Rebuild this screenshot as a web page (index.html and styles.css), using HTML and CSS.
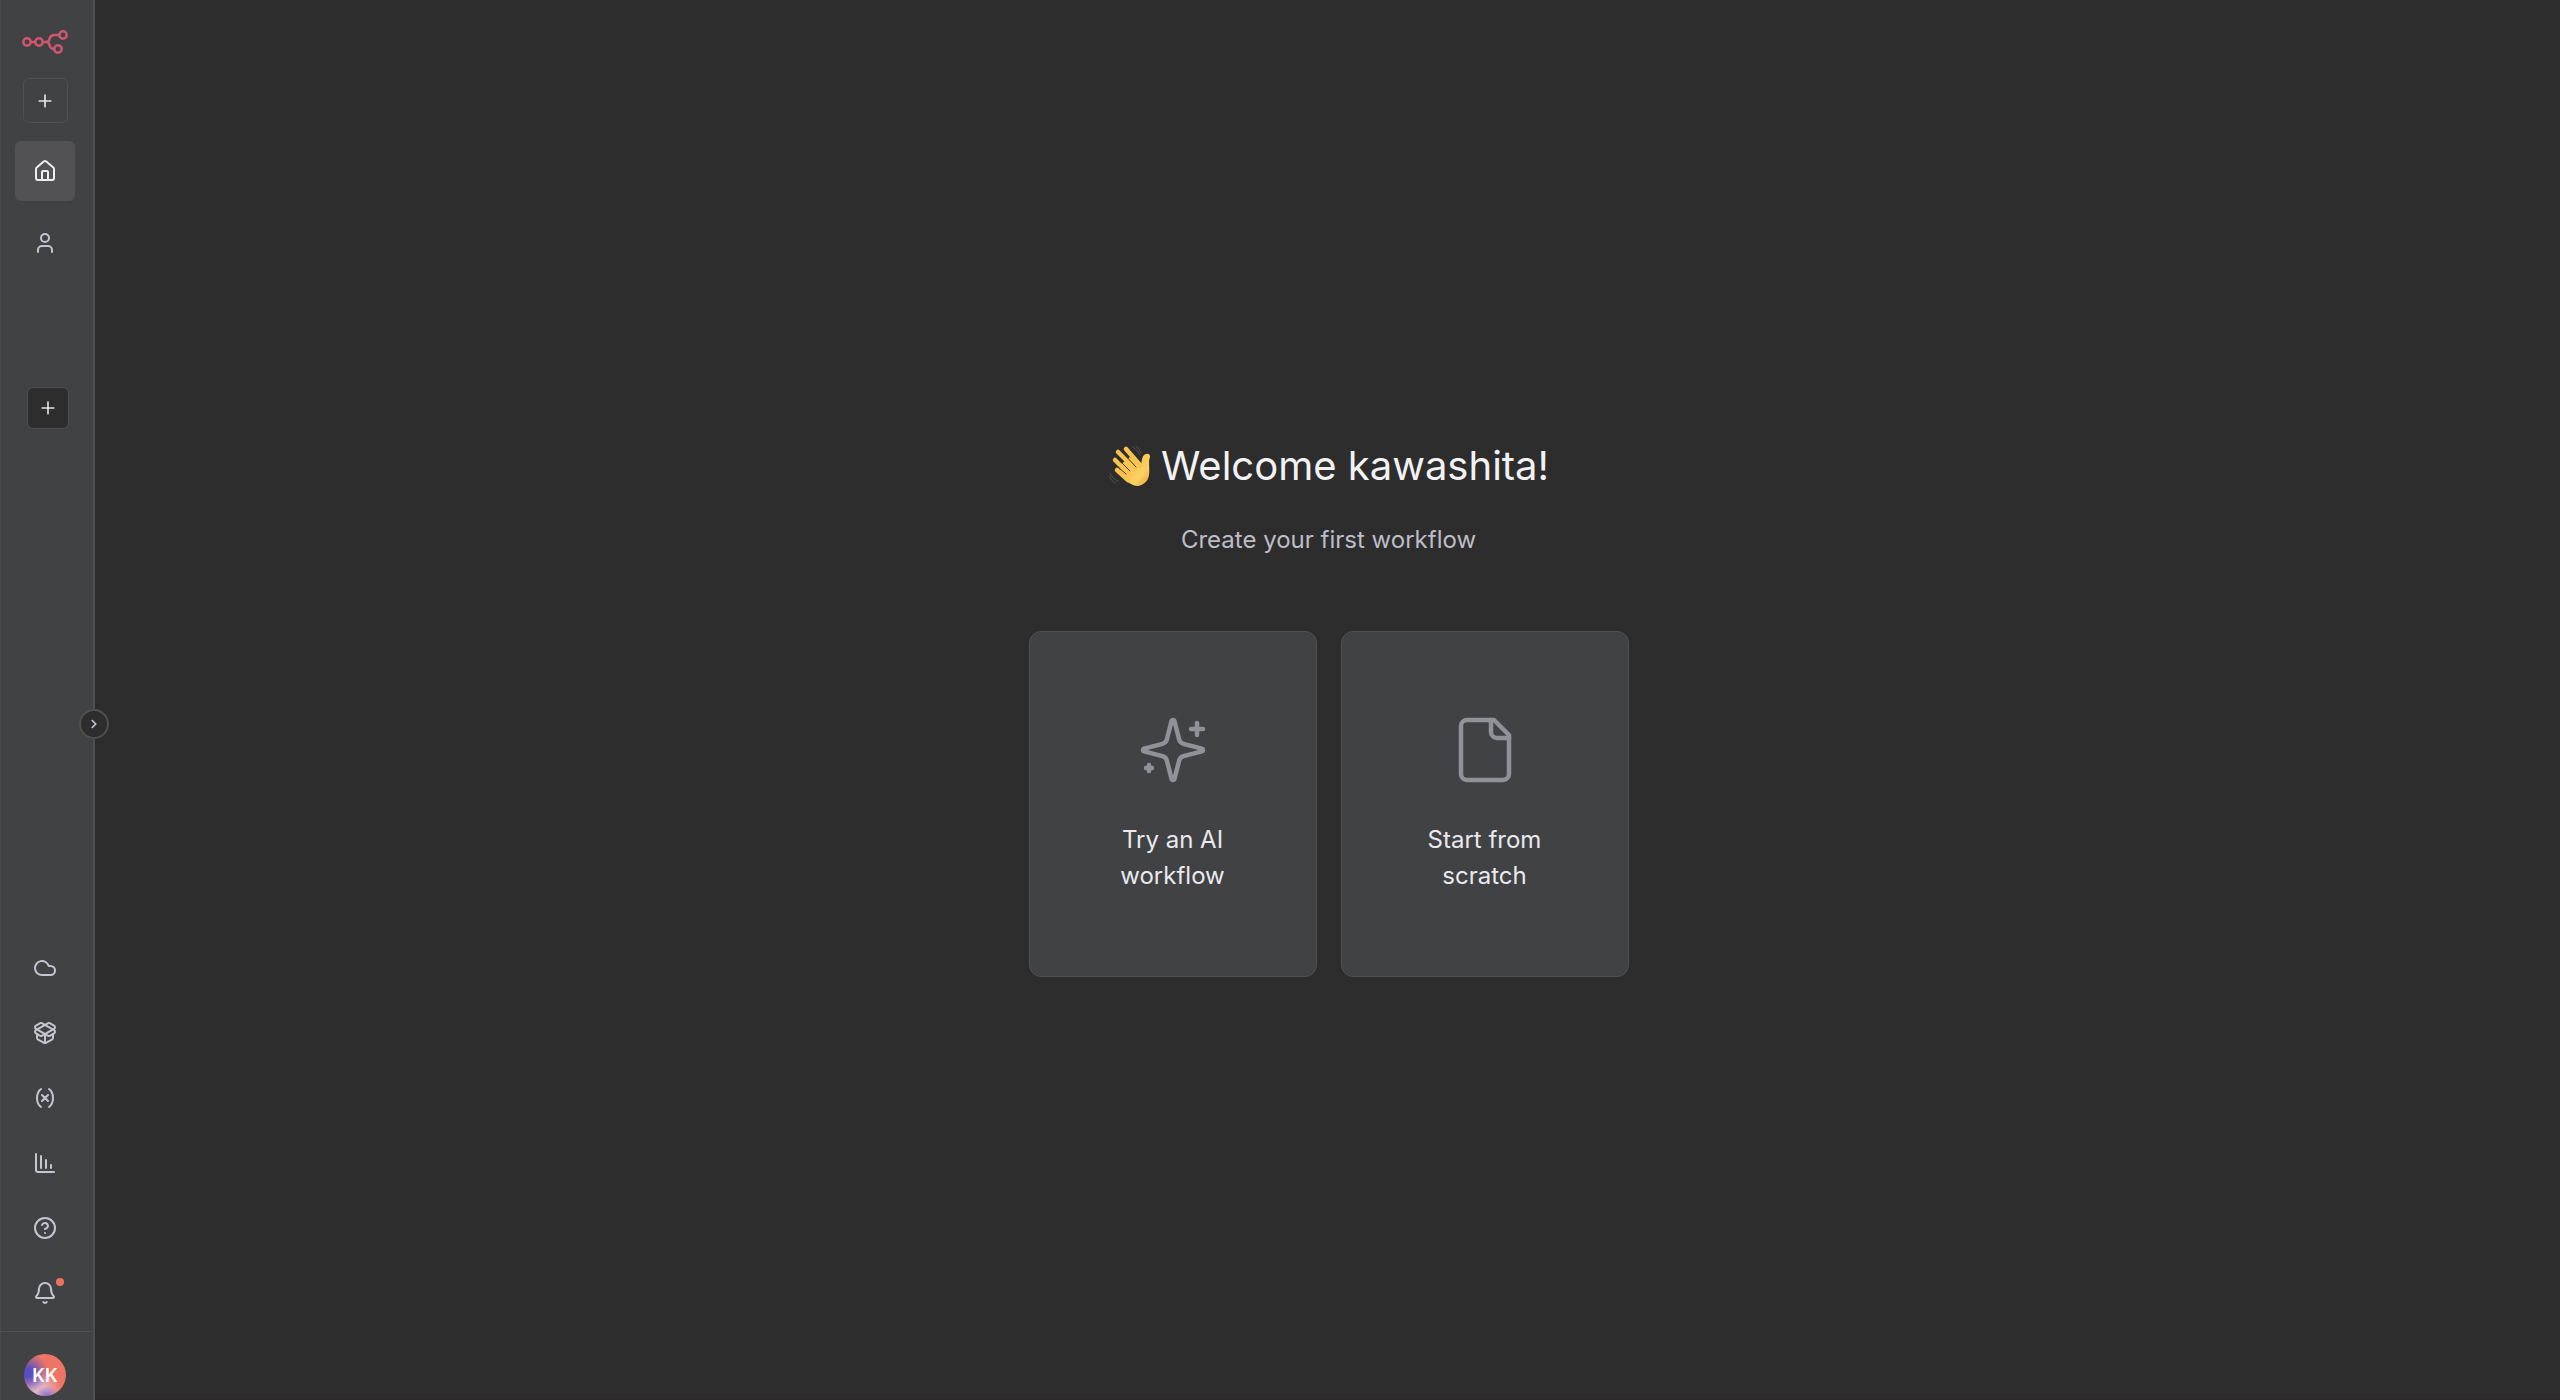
FILE: index.html
```html
<!DOCTYPE html>
<html lang="en">
<head>
    <title>Workflows</title>
    <meta charset="utf-8">
    <meta name="viewport" content="width=device-width, initial-scale=1">
    <link rel="stylesheet" href="styles.css">
</head>
<body>
    <aside class="sidebar">
        <div class="top">
            <a href="#" class="logo" aria-label="Overview">
                <svg viewBox="0 0 46 24" width="46" height="24" fill="none" stroke="currentColor" stroke-width="2.500">
                    <circle cx="5" cy="12" r="3.700"/>
                    <circle cx="17" cy="12" r="3.700"/>
                    <circle cx="41" cy="5" r="3.700"/>
                    <circle cx="36" cy="19" r="3.700"/>
                    <path d="M9 12h4M21 12h3q3 0 3.500-3t4-4h5.500M24 12q3 0 3.500 3t3.500 4h1"/>
                </svg>
            </a>
            <button class="add" aria-label="Create"><svg class="icon" viewBox="0 0 24 24"><path d="M5 12h14M12 5v14"/></svg></button>
            <nav class="menu">
                <a href="#" class="item active" aria-label="Home"><svg class="icon" viewBox="0 0 24 24"><path d="M15 21v-8a1 1 0 0 0-1-1h-4a1 1 0 0 0-1 1v8"/><path d="M3 10a2 2 0 0 1 .709-1.528l7-5.999a2 2 0 0 1 2.582 0l7 5.999A2 2 0 0 1 21 10v9a2 2 0 0 1-2 2H5a2 2 0 0 1-2-2z"/></svg></a>
                <a href="#" class="item" aria-label="Personal"><svg class="icon" viewBox="0 0 24 24"><path d="M19 21v-2a4 4 0 0 0-4-4H9a4 4 0 0 0-4 4v2"/><circle cx="12" cy="7" r="4"/></svg></a>
            </nav>
            <button class="add project" aria-label="Add project"><svg class="icon" viewBox="0 0 24 24"><path d="M5 12h14M12 5v14"/></svg></button>
        </div>

        <button class="toggle" aria-label="Expand sidebar"><svg class="icon" viewBox="0 0 24 24"><path d="m9 18 6-6-6-6"/></svg></button>

        <nav class="bottom">
            <a href="#" class="link" aria-label="Admin panel"><svg class="icon" viewBox="0 0 24 24"><path d="M17.500 19H9a7 7 0 1 1 6.710-9h1.790a4.500 4.500 0 1 1 0 9Z"/></svg></a>
            <a href="#" class="link" aria-label="Templates"><svg class="icon" viewBox="0 0 24 24"><path d="M12 22v-9"/><path d="M15.170 2.210a1.670 1.670 0 0 1 1.630 0L21 4.570a1.930 1.930 0 0 1 0 3.360L8.820 14.790a1.655 1.655 0 0 1-1.640 0L3 12.430a1.930 1.930 0 0 1 0-3.360z"/><path d="M20 13v3.870a2.060 2.060 0 0 1-1.110 1.830l-6 3.080a1.930 1.930 0 0 1-1.780 0l-6-3.080A2.060 2.060 0 0 1 4 16.870V13"/><path d="M21 12.430a1.930 1.930 0 0 0 0-3.360L8.830 2.200a1.640 1.640 0 0 0-1.630 0L3 4.570a1.930 1.930 0 0 0 0 3.360l12.180 6.860a1.636 1.636 0 0 0 1.630 0z"/></svg></a>
            <a href="#" class="link" aria-label="Variables"><svg class="icon" viewBox="0 0 24 24"><path d="M8 21s-4-3-4-9 4-9 4-9M16 3s4 3 4 9-4 9-4 9M15 9l-6 6M9 9l6 6"/></svg></a>
            <a href="#" class="link" aria-label="Insights"><svg class="icon" viewBox="0 0 24 24"><path d="M3 3v16a2 2 0 0 0 2 2h16M8 17V5M13 17V9M18 17v-3"/></svg></a>
            <a href="#" class="link" aria-label="Help"><svg class="icon" viewBox="0 0 24 24"><circle cx="12" cy="12" r="10"/><path d="M9.090 9a3 3 0 0 1 5.830 1c0 2-3 3-3 3M12 17h.010"/></svg></a>
            <a href="#" class="link" aria-label="What's new"><svg class="icon" viewBox="0 0 24 24"><path d="M10.268 21a2 2 0 0 0 3.464 0"/><path d="M3.262 15.326A1 1 0 0 0 4 17h16a1 1 0 0 0 .740-1.673C19.410 13.956 18 12.499 18 8A6 6 0 0 0 6 8c0 4.499-1.411 5.956-2.738 7.326"/></svg><span class="dot"></span></a>
        </nav>
        <div class="user">
            <button class="avatar" aria-label="Account">KK</button>
        </div>
    </aside>

    <main class="content">
        <h1>
            <svg class="wave" viewBox="0 0 42 42" aria-hidden="true">
                <defs>
                    <linearGradient id="skin" x1="0" y1="0" x2="1" y2="1">
                        <stop offset="0" stop-color="#f7bf4b"/>
                        <stop offset=".7" stop-color="#fbcf63"/>
                        <stop offset="1" stop-color="#e3a035"/>
                    </linearGradient>
                </defs>
                <path d="M12 20 22 12 33 20C34 15 34 10 38 9q4-1 4 3c-2 5 0 11-1 18-1 8-9 13-16 10-5-2-8-5-12-9z" fill="url(#skin)"/>
                <path d="M9 25 20 35M7 15 22 30M10 7 27 24M18 4 32 20" stroke="#f8c451" stroke-width="4.500" stroke-linecap="round" fill="none"/>
                <path d="M10 22l8 7M11 15l11 11M16 9l12 13" stroke="#4b351b" stroke-width="1" stroke-linecap="round" fill="none"/>
                <path d="M25 2q5 3 7 8M28 1q4 3 5 7M2 28q2 6 8 8M1 31q2 5 6 7" stroke="#505050" stroke-width="1" stroke-linecap="round" fill="none"/>
            </svg>
            Welcome kawashita!
        </h1>
        <p class="subtitle">Create your first workflow</p>
        <div class="cards">
            <button class="card">
                <svg class="icon" viewBox="0 0 24 24"><path d="M9.937 15.500A2 2 0 0 0 8.500 14.063l-6.135-1.582a.5.5 0 0 1 0-.962L8.500 9.936A2 2 0 0 0 9.937 8.500l1.582-6.135a.5.5 0 0 1 .963 0L14.063 8.500A2 2 0 0 0 15.500 9.937l6.135 1.581a.5.5 0 0 1 0 .964L15.500 14.063a2 2 0 0 0-1.437 1.437l-1.582 6.135a.5.5 0 0 1-.963 0zM20 3v4M22 5h-4M4 17v2M5 18H3"/></svg>
                <span>Try an AI workflow</span>
            </button>
            <button class="card">
                <svg class="icon" viewBox="0 0 24 24"><path d="M15 2H6a2 2 0 0 0-2 2v16a2 2 0 0 0 2 2h12a2 2 0 0 0 2-2V7Z"/><path d="M14 2v4a2 2 0 0 0 2 2h4"/></svg>
                <span>Start from scratch</span>
            </button>
        </div>
    </main>
</body>
</html>
```

FILE: styles.css
```css
* { box-sizing: border-box; }
body { display: flex; min-height: 100vh; margin: 0; background: #2d2d2d; color: #f2f2f5; font-family: Inter, sans-serif; }
button { padding: 0; border: 0; background: none; color: inherit; font: inherit; cursor: pointer; }
a { color: inherit; text-decoration: none; }
.icon { width: 24px; height: 24px; fill: none; stroke: currentColor; stroke-width: 2; stroke-linecap: round; stroke-linejoin: round; }

.sidebar { position: relative; display: flex; flex-direction: column; flex-shrink: 0; width: 95px; height: 100vh; background: #414244; border-left: 1px solid #4a4a4d; border-right: 2px solid #505052; color: #c5c5cf; }
.top { display: flex; flex-direction: column; align-items: center; width: 88px; padding-top: 30px; }
.logo { display: flex; color: #cf5670; }
.add { display: flex; align-items: center; justify-content: center; width: 45px; height: 45px; margin-top: 24px; border: 1px solid #505052; border-radius: 6px; color: #e4e4e8; }
.add .icon { width: 20px; height: 20px; }
.menu { display: flex; flex-direction: column; gap: 12px; margin-top: 18px; }
.item { display: flex; align-items: center; justify-content: center; width: 60px; height: 60px; border-radius: 6px; }
.active { background: #525254; color: #eeeef2; }
.project { width: 42px; height: 42px; margin: 114px 0 0 6px; background: #2d2d2d; }

.toggle { position: absolute; top: calc(50% + 9px); right: -16px; display: flex; align-items: center; justify-content: center; width: 30px; height: 30px; background: #2d2d2d; border: 2px solid #505052; border-radius: 50%; }
.toggle .icon { width: 14px; height: 14px; stroke-width: 3; }

.bottom { display: flex; flex-direction: column; gap: 5px; width: 88px; margin-top: auto; padding-bottom: 8px; }
.link { position: relative; display: flex; align-items: center; justify-content: center; height: 60px; }
.dot { position: absolute; top: 15px; right: 25px; width: 8px; height: 8px; border-radius: 50%; background: #f0735f; }
.user { display: flex; justify-content: center; padding: 22px 4px 4px 0; border-top: 1px solid #505052; }
.avatar { width: 42px; height: 42px; border-radius: 50%; background: radial-gradient(circle at 10% 45%, #5a4fc0 10%, transparent 45%), radial-gradient(circle at 55% 105%, #8a72cc 5%, transparent 25%), radial-gradient(circle at 35% 90%, #e5b5c4 15%, transparent 50%), #ee7565; color: #fff; font-size: 18px; font-weight: 600; }

.content { display: flex; flex: 1; flex-direction: column; align-items: center; justify-content: center; padding: 18px 0 0 2px; border-bottom: 1px solid #2d252b; }
h1 { display: flex; align-items: center; gap: 11px; margin: 0; font-size: 40px; font-weight: 400; line-height: 52px; }
.wave { width: 42px; height: 42px; }
.subtitle { margin: 30px 0 73px; color: #bdbdc8; font-size: 24px; line-height: 36px; }
.cards { display: flex; gap: 24px; }
.card { display: flex; flex-direction: column; align-items: center; justify-content: center; gap: 36px; width: 288px; height: 346px; padding: 0 80px; background: #414244; border: 1px solid #505052; border-radius: 12px; color: #e9e9ee; font-size: 24px; line-height: 36px; }
.card .icon { width: 72px; height: 72px; color: #919298; stroke-width: 1.5; }
```
